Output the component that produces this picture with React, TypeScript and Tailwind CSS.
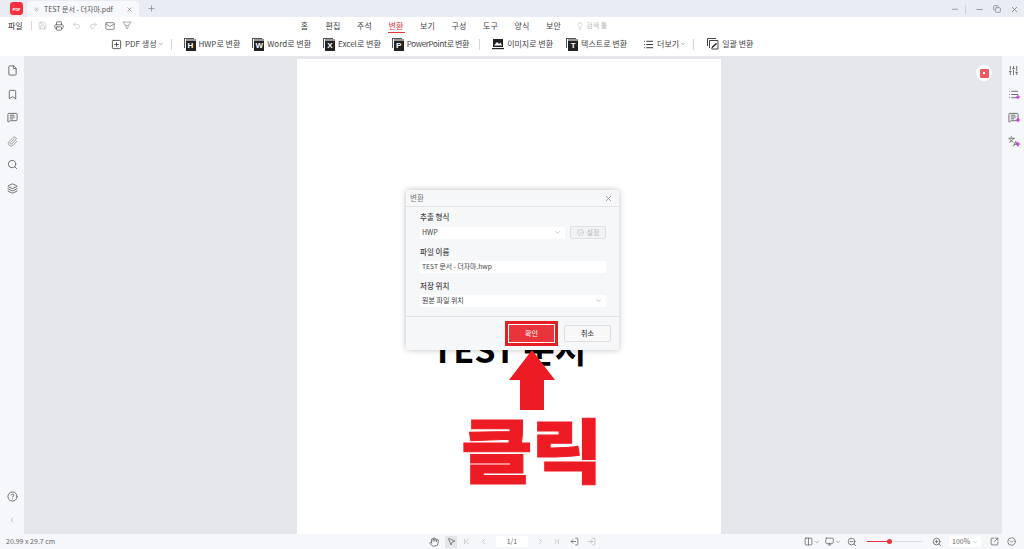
import {
  Bookmark,
  ChevronDown,
  ChevronFirst,
  ChevronLast,
  ChevronLeft,
  ChevronRight,
  ChevronsDown,
  CircleChevronDown,
  CircleDot,
  CircleHelp,
  Copy,
  File,
  Hand,
  Layers,
  Lightbulb,
  List,
  LogIn,
  LogOut,
  Mail,
  MessageSquareText,
  Minus,
  MousePointer2,
  Paperclip,
  Plus,
  Printer,
  Redo2,
  Save,
  Search,
  SlidersVertical,
  SquareArrowOutUpRight,
  SquarePlus,
  Undo2,
  X,
  ZoomIn,
  ZoomOut,
  Languages,
  Columns2,
  Monitor,
} from "lucide-react";

const font = "font-['Noto_Sans_CJK_KR','Noto_Sans',sans-serif]";

const tabs = ["홈", "편집", "주석", "변환", "보기", "구성", "도구", "양식", "보안"];

function BoxIcon({ letter }: { letter: string }) {
  return (
    <span className="relative block w-[12px] h-[13px] shrink-0">
      <span className="absolute left-0 top-0 w-[10px] h-[10px] border-l border-t border-[#555]" />
      <span className="absolute left-[2px] top-[1.5px] w-[10px] h-[2px] bg-[#999]" />
      <span className="absolute right-0 bottom-0 w-[10px] h-[10px] bg-[#222] text-white text-[8px] leading-[10px] text-center font-bold font-['Liberation_Sans',sans-serif]">
        {letter}
      </span>
    </span>
  );
}

function ToolItem({ icon, label, ml, tight }: { icon: React.ReactNode; label: string; ml: string; tight?: boolean }) {
  return (
    <div className={`flex items-center gap-[3px] ${ml}`}>
      {icon}
      <span className={`text-[8px] leading-none text-[#444] whitespace-nowrap ${tight ? "tracking-[-0.35px]" : ""}`}>
        {label}
      </span>
    </div>
  );
}

function Sep({ ml }: { ml: string }) {
  return <div className={`w-px h-[11px] bg-[#d5d7da] ${ml}`} />;
}

function SideIcon({ children }: { children: React.ReactNode }) {
  return <div className="h-[23.5px] flex items-center justify-center text-[#666]">{children}</div>;
}

function MagicMark() {
  return <Plus size={6} strokeWidth={4} className="absolute right-[-2px] bottom-[0px] text-[#c026d3]" />;
}

function Dialog() {
  return (
    <div className="absolute left-[109px] top-[131px] w-[213px] h-[160px] rounded-[3px] bg-[#f6f7f9] shadow-[0_0_6px_rgba(0,0,0,0.25)] flex flex-col text-[#444]">
      <div className="h-[17px] shrink-0 border-b border-[#e1e3e6] flex items-center justify-between pl-[4px] pr-[6px]">
        <span className="text-[7.5px] text-[#777] leading-none">변환</span>
        <X size={9} className="text-[#888]" />
      </div>
      <div className="flex-1 pl-[14px] pr-[13px] pt-[5px]">
        <div className="text-[7.5px] leading-[10px] font-medium">추출 형식</div>
        <div className="flex gap-[5px] mt-[4px] items-center">
          <div className="w-[145px] h-[12px] bg-white rounded-[1px] flex items-center justify-between px-[2px] text-[7px]">
            <span>HWP</span>
            <ChevronDown size={7} className="text-[#999] mr-[2px]" />
          </div>
          <div className="w-[36px] h-[13px] border border-[#dfe1e4] rounded-[2px] bg-[#f1f2f4] flex items-center justify-center gap-[3px] text-[7px] text-[#bbb]">
            <CircleDot size={7} />
            <span>설정</span>
          </div>
        </div>
        <div className="text-[7.5px] leading-[10px] font-medium mt-[7.5px]">파일 이름</div>
        <div className="w-[186px] h-[12px] bg-white rounded-[1px] flex items-center px-[2px] mt-[4px] text-[6.8px]">
          TEST 문서 - 더자마.hwp
        </div>
        <div className="text-[7.5px] leading-[10px] font-medium mt-[8px]">저장 위치</div>
        <div className="w-[186px] h-[12px] bg-white rounded-[1px] flex items-center justify-between px-[2px] mt-[4px] text-[7px]">
          <span>원본 파일 위치</span>
          <ChevronDown size={7} className="text-[#999] mr-[2px]" />
        </div>
      </div>
      <div className="h-[34px] shrink-0 border-t border-[#e1e3e6] flex items-center justify-end pr-[8px] gap-[6px]">
        <div className="w-[53px] h-[25px] border-[3px] border-[#e81c24] flex items-center justify-center">
          <div className="w-full h-full bg-[#e8343a] border border-white flex items-center justify-center text-[7px] text-white">
            확인
          </div>
        </div>
        <div className="w-[47px] h-[17px] border border-[#dcdee1] rounded-[2px] bg-[#f8f8f9] flex items-center justify-center text-[7px] font-medium">
          취소
        </div>
      </div>
    </div>
  );
}

export default function App() {
  return (
    <div className={`w-[1024px] h-[549px] flex flex-col overflow-hidden bg-white ${font}`}>
      {/* title bar */}
      <div className="h-[17px] shrink-0 bg-[#e9edf3] flex items-end text-[#555]">
        <div className="w-[13px] h-[13px] ml-[10px] mb-[2px] rounded-[3px] bg-[#f7303f] flex items-center justify-center text-white text-[4px] font-bold leading-none">
          PDF
        </div>
        <div className="w-[112px] h-[16px] ml-[4px] bg-[#f7f8fb] rounded-t-[4px] flex items-center pl-[6px] pr-[6px]">
          <ChevronsDown size={7} className="text-[#888]" />
          <span className="text-[7px] leading-none ml-[4px] whitespace-nowrap">TEST 문서 - 더자마.pdf</span>
          <X size={7} className="ml-auto text-[#777]" />
        </div>
        <Plus size={9} className="ml-[8px] mb-[4px] text-[#888]" />
        <div className="ml-auto flex items-center h-[16px]">
          <span className="text-[6px] leading-none text-[#999]">•••</span>
          <div className="w-px h-[9px] bg-[#cfd2d6] ml-[7px]" />
          <Minus size={9} className="ml-[9px] text-[#777]" />
          <Copy size={8} className="ml-[9px] text-[#777]" />
          <X size={9} className="ml-[9px] mr-[5px] text-[#777]" />
        </div>
      </div>

      {/* menu row */}
      <div className="h-[17px] shrink-0 flex items-center text-[#555]">
        <span className="text-[8px] leading-none ml-[8px] text-[#333]">파일</span>
        <div className="w-px h-[9px] bg-[#d5d7da] ml-[8px]" />
        <Save size={9} className="ml-[6px] text-[#c4c6c9]" />
        <Printer size={10} className="ml-[7px] text-[#666]" />
        <Undo2 size={9} className="ml-[8px] text-[#c4c6c9]" />
        <Redo2 size={9} className="ml-[8px] text-[#c4c6c9]" />
        <Mail size={10} className="ml-[7px] text-[#777]" />
        <svg width="10" height="9" viewBox="0 0 10 9" fill="none" stroke="#999" className="ml-[7px]">
          <path d="M.5 1h9M1.5 1 5 8l3.5-7M3.5 3.5 5 5l1.5-1.5" strokeWidth="0.8" />
        </svg>
        <div className="flex ml-[160px]">
          {tabs.map((t) => (
            <div
              key={t}
              className={`relative h-[17px] flex items-center justify-center ${t === "홈" ? "w-[25.5px]" : "w-[31.5px]"}`}
            >
              <span className={`text-[8px] leading-none ${t === "변환" ? "text-[#e8343a]" : "text-[#444]"}`}>{t}</span>
              {t === "변환" && <span className="absolute left-[8px] right-[7px] bottom-[1px] h-[1.5px] bg-[#e8343a]" />}
            </div>
          ))}
        </div>
        <Lightbulb size={8} className="ml-[7px] text-[#c4c6c9]" />
        <span className="text-[7px] leading-none ml-[2px] text-[#bbb]">검색 툴</span>
      </div>

      {/* convert toolbar */}
      <div className="h-[22px] pb-[2px] shrink-0 flex items-center">
        <ToolItem
          ml="ml-[111px]"
          label="PDF 생성"
          icon={<SquarePlus size={11} strokeWidth={1.6} className="text-[#222]" />}
        />
        <ChevronDown size={6} className="ml-[1px] text-[#666]" />
        <Sep ml="ml-[7px]" />
        <ToolItem ml="ml-[12px]" label="HWP로 변환" icon={<BoxIcon letter="H" />} />
        <ToolItem ml="ml-[12px]" label="Word로 변환" icon={<BoxIcon letter="W" />} />
        <ToolItem ml="ml-[12px]" label="Excel로 변환" icon={<BoxIcon letter="X" />} />
        <ToolItem ml="ml-[11px]" tight label="PowerPoint로 변환" icon={<BoxIcon letter="P" />} />
        <Sep ml="ml-[10px]" />
        <ToolItem
          ml="ml-[12px]"
          label="이미지로 변환"
          icon={
            <svg width="12" height="12" viewBox="0 0 12 12" className="shrink-0">
              <path d="M1 1h10v8H1z" fill="#222" />
              <path d="M2 7.5 5 4l2 2 1.5-1.5L10 7.5z" fill="#fff" />
              <path d="M0 10h12v1.2H0z" fill="#222" />
            </svg>
          }
        />
        <ToolItem ml="ml-[13px]" label="텍스트로 변환" icon={<BoxIcon letter="T" />} />
        <ToolItem ml="ml-[16px]" label="더보기" icon={<List size={11} className="text-[#222]" />} />
        <ChevronDown size={6} className="ml-[1px] text-[#666]" />
        <Sep ml="ml-[7px]" />
        <ToolItem
          ml="ml-[13px]"
          label="일괄 변환"
          icon={
            <svg width="12" height="12" viewBox="0 0 12 12" fill="none" stroke="#444" className="shrink-0">
              <path d="M.5 8V.5H9" />
              <path d="M2.5 10V2.5H11V11H5" />
              <path d="M4 11.5 5 8.5l4-3.5 1 1-4 3.5z" fill="#222" stroke="none" />
            </svg>
          }
        />
      </div>

      {/* main */}
      <div className="flex-1 min-h-0 flex">
        <div className="w-[24px] shrink-0 bg-[#f5f7fa] flex flex-col pt-[3px]">
          <SideIcon><File size={11} /></SideIcon>
          <SideIcon><Bookmark size={11} /></SideIcon>
          <SideIcon><MessageSquareText size={11} /></SideIcon>
          <SideIcon><Paperclip size={11} className="text-[#999]" /></SideIcon>
          <SideIcon><Search size={11} /></SideIcon>
          <SideIcon><Layers size={11} /></SideIcon>
          <div className="mt-auto mb-[2px]">
            <SideIcon><CircleHelp size={11} /></SideIcon>
            <SideIcon><ChevronLeft size={8} className="text-[#aaa]" /></SideIcon>
          </div>
        </div>

        <div className="relative flex-1 bg-[#e4e6ea] pt-[3px] pl-[273px] overflow-hidden">
          <div className="relative w-[424px] h-full bg-white">
            <div className="absolute left-[135px] top-[268px] text-[34px] leading-[44px] font-bold text-black whitespace-nowrap">
              TEST 문서
            </div>
            <Dialog />
            <svg width="48" height="62" viewBox="0 0 48 62" className="absolute left-[211px] top-[291px]">
              <path d="M24 0 47 30H36V60H12V30H1z" fill="#ed1c24" />
            </svg>
            <div className="absolute left-[164px] top-[344px] origin-left scale-x-[1.11] text-[70px] leading-[90px] font-black text-[#ed1c24] whitespace-nowrap tracking-[-1px] [-webkit-text-stroke:1px_#ed1c24]">
              클릭
            </div>
          </div>
          <div className="absolute left-[952px] top-[9px] w-[16px] h-[16px] rounded-full bg-white flex items-center justify-center">
            <div className="w-[9px] h-[9px] rounded-[1px] bg-[#ee5a5f] flex items-center justify-center">
              <div className="w-[2px] h-[2px] bg-white" />
            </div>
          </div>
        </div>

        <div className="w-[22px] shrink-0 bg-[#f5f7fa] flex flex-col pt-[3px]">
          <SideIcon><SlidersVertical size={11} /></SideIcon>
          <SideIcon>
            <span className="relative block"><List size={11} /><MagicMark /></span>
          </SideIcon>
          <SideIcon>
            <span className="relative block"><MessageSquareText size={11} /><MagicMark /></span>
          </SideIcon>
          <SideIcon>
            <span className="relative block"><Languages size={11} /><MagicMark /></span>
          </SideIcon>
        </div>
      </div>

      {/* status bar */}
      <div className="h-[15px] shrink-0 bg-[#f5f7fa] flex items-center text-[#666]">
        <span className="w-[60px] ml-[6px] text-[7px] leading-none whitespace-nowrap">20.99 x 29.7 cm</span>
        <Hand size={10} className="ml-[363px]" />
        <div className="ml-[6px] w-[12px] h-[12px] bg-[#e4e6ea] rounded-[1px] flex items-center justify-center">
          <MousePointer2 size={9} />
        </div>
        <ChevronFirst size={9} className="ml-[5px] text-[#bbb]" />
        <ChevronLeft size={9} className="ml-[8px] text-[#bbb]" />
        <div className="ml-[8px] w-[32px] h-[11px] bg-white rounded-[1px] flex items-center justify-center text-[7px] leading-none">
          1/1
        </div>
        <ChevronRight size={9} className="ml-[8px] text-[#bbb]" />
        <ChevronLast size={9} className="ml-[7px] text-[#bbb]" />
        <LogOut size={9} className="ml-[9px] -scale-x-100" />
        <LogIn size={9} className="ml-[8px] text-[#bbb]" />
        <Columns2 size={9} className="ml-[208px]" />
        <ChevronDown size={6} className="ml-[1px]" />
        <Monitor size={9} className="ml-[5px]" />
        <ChevronDown size={6} className="ml-[1px]" />
        <ZoomOut size={10} className="ml-[6px]" />
        <div className="ml-[10px] w-[56px] h-[1.5px] bg-[#dcdee1] relative">
          <div className="absolute left-0 top-0 h-full w-[22px] bg-[#e8343a]" />
          <div className="absolute left-[20px] top-[-1.5px] w-[4.5px] h-[4.5px] rounded-full bg-[#e8343a]" />
        </div>
        <ZoomIn size={10} className="ml-[9px]" />
        <div className="ml-[7px] w-[32px] h-[11px] bg-white rounded-[1px] flex items-center justify-between px-[3px] text-[7px] leading-none">
          <span>100%</span>
          <ChevronDown size={6} className="text-[#aaa]" />
        </div>
        <SquareArrowOutUpRight size={9} className="ml-[9px]" />
        <CircleChevronDown size={9} className="ml-[8px]" />
      </div>
    </div>
  );
}
